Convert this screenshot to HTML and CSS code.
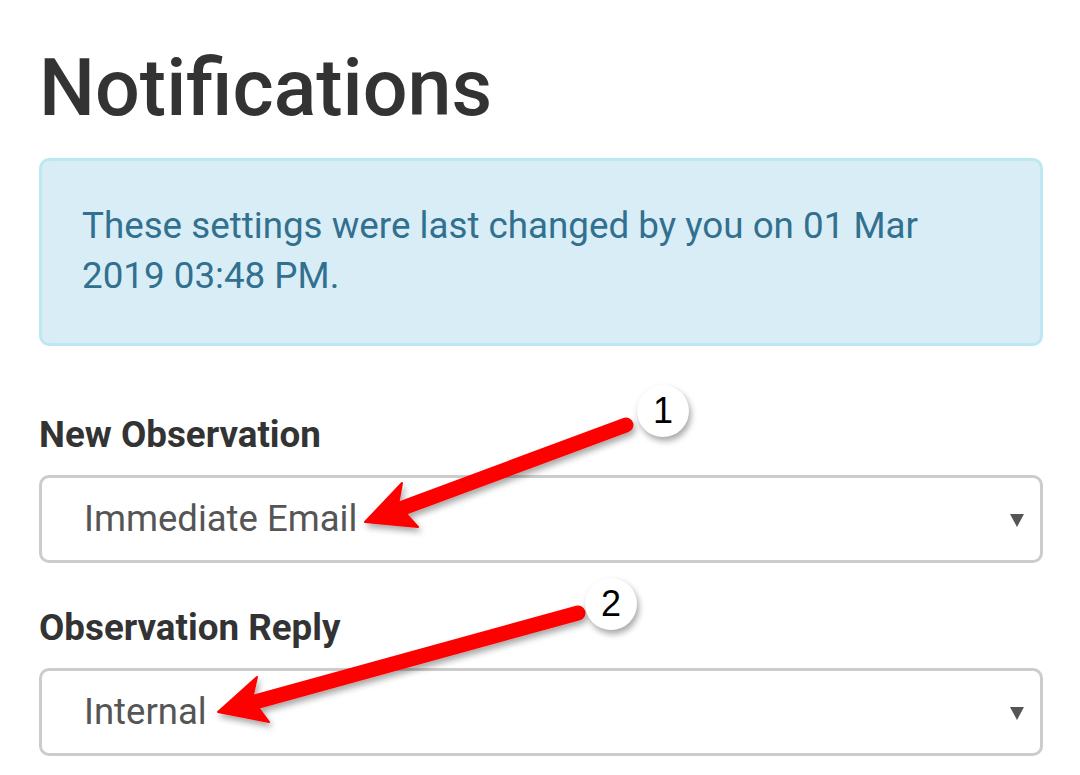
FILE: index.html
```html
<!DOCTYPE html>
<html lang="en">
<head>
    <meta charset="UTF-8">
    <meta name="viewport" content="width=device-width, initial-scale=1.0">
    <title>Notifications</title>
    <link rel="stylesheet" href="styles.css">
</head>
<body>
    <div class="page">
        <h1>Notifications</h1>

        <div class="alert">
            These settings were last changed by you on 01 Mar 2019 03:48 PM.
        </div>

        <div class="form-group">
            <label>New Observation</label>
            <div class="select">
                <span>Immediate Email</span>
                <svg class="caret" width="14" height="14" viewBox="0 0 14 14"><path d="M0 1 H14 L7 14 Z" fill="#555"/></svg>
            </div>
        </div>

        <div class="form-group">
            <label>Observation Reply</label>
            <div class="select">
                <span>Internal</span>
                <svg class="caret" width="14" height="14" viewBox="0 0 14 14"><path d="M0 1 H14 L7 14 Z" fill="#555"/></svg>
            </div>
        </div>
    </div>

    <!-- callout annotations -->
    <svg class="arrows" width="1080" height="775" viewBox="0 0 1080 775">
        <defs>
            <filter id="shadow" x="-10%" y="-20%" width="130%" height="150%">
                <feDropShadow dx="2" dy="4" stdDeviation="3" flood-color="#000" flood-opacity="0.35"/>
            </filter>
        </defs>
        <g filter="url(#shadow)" fill="#ff0000" stroke="#ff0000">
            <line x1="626" y1="425" x2="400" y2="509" stroke-width="15" stroke-linecap="round"/>
            <path d="M365 522 L402 483 L398 505 L418 527 Z" stroke-width="2" stroke-linejoin="round"/>
            <line x1="578" y1="613" x2="255" y2="702" stroke-width="15" stroke-linecap="round"/>
            <path d="M218 712 L257 677 L252 699 L269 722 Z" stroke-width="2" stroke-linejoin="round"/>
        </g>
    </svg>
    <div class="badge badge-one">1</div>
    <div class="badge badge-two">2</div>
</body>
</html>
```
FILE: styles.css
```css
body {
    margin: 0;
    width: 1080px;
    height: 775px;
    overflow: hidden;
    position: relative;
    background: #fff;
    font-family: Roboto, "Liberation Sans", sans-serif;
    color: #333;
}

.page {
    padding: 45px 37px 0 39px;
}

h1 {
    margin: 0 0 26px;
    font-size: 79px;
    font-weight: 500;
    line-height: 1.1;
    color: #333;
}

.alert {
    background-color: #d9edf7;
    border: 3px solid #bce8f1;
    border-radius: 10px;
    color: #31708f;
    font-size: 36.75px;
    line-height: 50px;
    padding: 40px 50px 42px 40px;
    margin-bottom: 64px;
}

.form-group {
    margin-bottom: 40px;
}

label {
    display: block;
    font-size: 36.75px;
    font-weight: 700;
    line-height: 50px;
    margin-bottom: 15px;
    color: #333;
}

.select {
    display: flex;
    align-items: center;
    justify-content: space-between;
    height: 82px;
    border: 3px solid #ccc;
    border-radius: 10px;
    padding: 0 16px 0 42px;
    font-size: 36.5px;
    color: #555;
}

.caret {
    margin-top: 2px;
}

/* annotations on top of the page */
.arrows {
    position: absolute;
    left: 0;
    top: 0;
    pointer-events: none;
}

.badge {
    position: absolute;
    width: 52px;
    height: 52px;
    border-radius: 50%;
    background: #fff;
    box-shadow: 2px 4px 6px rgba(0, 0, 0, 0.35);
    font-family: "Liberation Sans", Arial, sans-serif;
    font-size: 36px;
    line-height: 52px;
    text-align: center;
    color: #000;
}

.badge-one {
    left: 637px;
    top: 385px;
}

.badge-two {
    left: 585px;
    top: 578px;
}
```
